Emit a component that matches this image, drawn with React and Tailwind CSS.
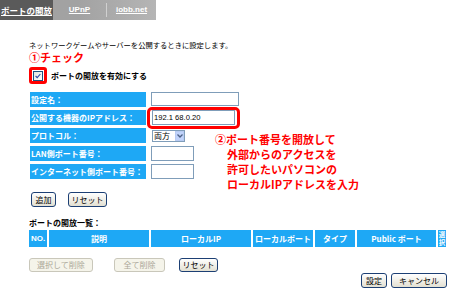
import React from "react";

function Btn({ children, className = "", disabled = false }) {
  return (
    <div
      className={
        "flex items-center justify-center rounded-[3px] border text-[8px] leading-none " +
        (disabled
          ? "border-[#c9c7ba] bg-[#f5f4ea] text-[#aca899] "
          : "border-[#1c3f74] bg-linear-to-b from-white to-[#e3e0d2] text-black ") +
        className
      }
    >
      {children}
    </div>
  );
}

function Label({ children }) {
  return (
    <div className="h-[15px] bg-[#1ea8f5] text-white font-bold text-[8px] leading-none flex items-center pl-[1px] whitespace-nowrap">
      {children}
    </div>
  );
}

export default function App() {
  return (
    <div className="relative w-[450px] h-[292px] bg-white overflow-hidden font-['Noto_Sans_CJK_JP',sans-serif] text-black">
      {/* Tabs */}
      <div className="flex h-[20px] w-[156px] bg-linear-to-r from-[#a2a2a2] via-[#a2a2a2] to-[#b5b5b5]">
        <div className="w-[53px] h-full bg-[#5a5a5a] flex items-center justify-center text-white font-bold text-[8.5px] leading-none underline">
          ポートの開放
        </div>
        <div className="w-[54px] h-[14px] self-center flex items-center justify-center text-white font-bold text-[8px] leading-none underline font-['Liberation_Sans',sans-serif] border-r border-[#d0d0d0]">
          UPnP
        </div>
        <div className="flex-1 h-full flex items-center justify-center text-white font-bold text-[8px] leading-none underline font-['Liberation_Sans',sans-serif]">
          iobb.net
        </div>
      </div>

      <div className="pl-[29px] flex flex-col">
        <div className="mt-[20px] h-[10px] text-[7.3px] leading-[10px] whitespace-nowrap">
          ネットワークゲームやサーバーを公開するときに設定します。
        </div>
        <div className="mt-[1px] h-[12px] text-[11px] leading-[12px] font-bold text-[#ff0000] whitespace-nowrap">
          ①チェック
        </div>
        <div className="mt-[4px] h-[17px] flex items-center">
          <div className="w-[18px] h-[17px] border-[3px] border-[#ff0000] rounded-[3px] flex items-center justify-center">
            <div className="w-[10px] h-[10px] border border-[#1c5180] bg-linear-to-br from-[#e4e4de] to-white flex items-center justify-center">
              <svg width="8" height="8" viewBox="0 0 8 8">
                <path d="M1.6 4 L3.2 5.6 L6.4 2" stroke="#2a46a8" strokeWidth="1.1" fill="none" />
              </svg>
            </div>
          </div>
          <span className="ml-[4px] text-[8px] font-bold leading-none whitespace-nowrap">
            ポートの開放を有効にする
          </span>
        </div>

        {/* Form */}
        <div className="relative mt-[8px] ml-[1px] grid grid-cols-[116px_auto] gap-x-[5px] gap-y-[3px] w-max">
          <Label>設定名：</Label>
          <div className="h-[15px] flex items-start">
            <div className="w-[88px] h-[14px] border border-[#7f9db9] bg-white" />
          </div>

          <Label>公開する機器のIPアドレス：</Label>
          <div className="h-[15px] flex items-center">
            <div className="-ml-[4px] h-[22px] w-[93px] border-[3px] border-[#ff0000] rounded-[5px] flex items-center px-[2px]">
              <div className="w-[83px] h-[15px] border border-[#7f9db9] bg-white flex items-center pl-[1px] text-[7.6px] leading-none font-['Liberation_Sans',sans-serif]">
                192.1 68.0.20
              </div>
            </div>
          </div>

          <Label>プロトコル：</Label>
          <div className="h-[15px] flex items-center">
            <div className="ml-[1px] w-[33px] h-[12px] border border-[#7f9db9] bg-white flex items-center justify-between">
              <span className="text-[8px] leading-none pl-[1px]">両方</span>
              <div className="w-[9px] h-[10px] bg-[#c1d3fb] border border-[#b8cbf2] flex items-center justify-center">
                <svg width="6" height="4" viewBox="0 0 6 4">
                  <path d="M0.5 0.5 L3 3 L5.5 0.5" stroke="#4d6185" strokeWidth="1.3" fill="none" />
                </svg>
              </div>
            </div>
          </div>

          <Label>LAN側ポート番号：</Label>
          <div className="h-[15px] flex items-center">
            <div className="w-[43px] h-[15px] border border-[#7f9db9] bg-white" />
          </div>

          <Label>インターネット側ポート番号：</Label>
          <div className="h-[15px] flex items-center">
            <div className="w-[43px] h-[15px] border border-[#7f9db9] bg-white" />
          </div>

          {/* Annotation callout */}
          <div className="absolute left-[185px] top-[40px] text-[#ff0000] font-bold text-[11px] leading-[15px] whitespace-nowrap">
            <div>②ポート番号を開放して</div>
            <div className="pl-[12px]">外部からのアクセスを</div>
            <div className="pl-[12px]">許可したいパソコンの</div>
            <div className="pl-[12px]">ローカルIPアドレスを入力</div>
          </div>
        </div>

        <div className="mt-[13px] flex ml-[2px] gap-[12px]">
          <Btn className="w-[25px] h-[15px]">追加</Btn>
          <Btn className="w-[39px] h-[15px]">リセット</Btn>
        </div>

        <div className="mt-[11px] h-[9px] text-[8px] font-bold leading-[9px] whitespace-nowrap">
          ポートの開放一覧：
        </div>

        <div className="mt-[3px] flex gap-[2px] h-[17px] text-white font-bold text-[8px] leading-none">
          <div className="w-[18px] bg-[#1ea8f5] flex items-center justify-center font-['Liberation_Sans',sans-serif]">NO.</div>
          <div className="w-[100px] bg-[#1ea8f5] flex items-center justify-center">説明</div>
          <div className="w-[100px] bg-[#1ea8f5] flex items-center justify-center">ローカルIP</div>
          <div className="w-[60px] bg-[#1ea8f5] flex items-center justify-center">ローカルポート</div>
          <div className="w-[40px] bg-[#1ea8f5] flex items-center justify-center">タイプ</div>
          <div className="w-[79px] bg-[#1ea8f5] flex items-center justify-center">Public ポート</div>
          <div className="w-[8px] bg-[#1ea8f5] overflow-hidden">
            <div className="text-[6.5px] leading-[8px] text-center">選<br />択</div>
          </div>
        </div>

        <div className="mt-[11px] flex h-[14px]">
          <Btn disabled className="w-[64px] h-[14px]">選択して削除</Btn>
          <Btn disabled className="ml-[21px] w-[51px] h-[14px]">全て削除</Btn>
          <Btn className="ml-[14px] w-[39px] h-[14px]">リセット</Btn>
        </div>
      </div>

      <div className="mt-[1px] flex justify-end pr-[3px] gap-[4px]">
        <Btn className="w-[26px] h-[15px]">設定</Btn>
        <Btn className="w-[56px] h-[15px]">キャンセル</Btn>
      </div>
    </div>
  );
}
